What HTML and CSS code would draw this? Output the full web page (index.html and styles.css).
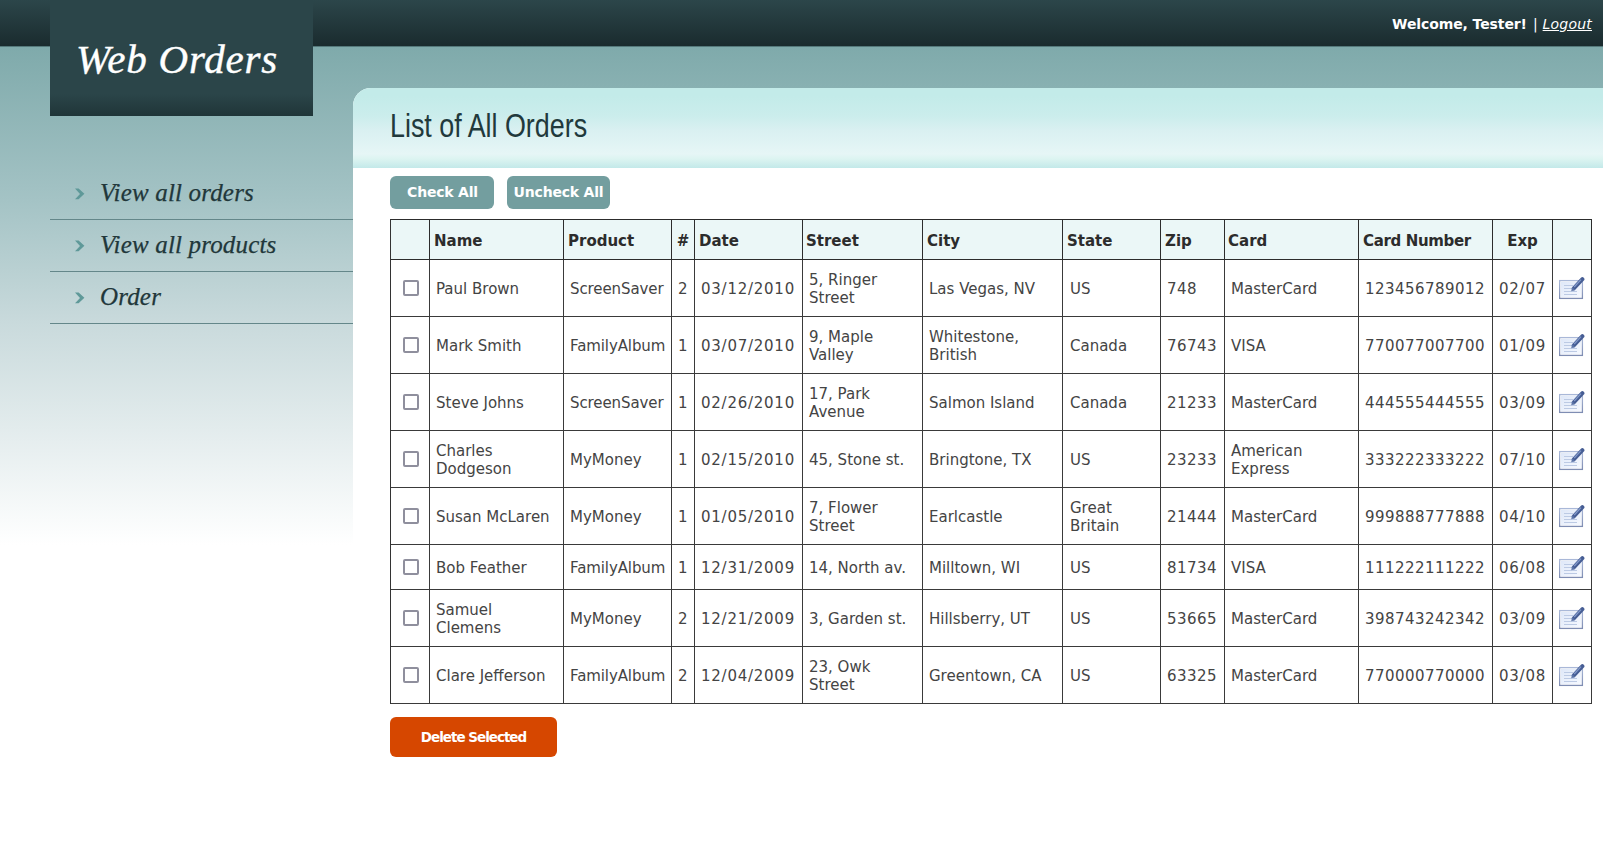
FILE: index.html
```html
<!DOCTYPE html>
<html lang="en">
<head>
<meta charset="utf-8">
<title>Web Orders</title>
<link rel="stylesheet" href="styles.css">
</head>
<body>
<svg class="defs" width="0" height="0">
  <defs>
    <linearGradient id="paper" x1="0" y1="0" x2="1" y2="1"><stop offset="0" stop-color="#dfe8f8"/><stop offset="1" stop-color="#f6f9ff"/></linearGradient>
    <linearGradient id="edge" x1="0" y1="0" x2="0" y2="1"><stop offset="0" stop-color="#a9b8d8"/><stop offset="1" stop-color="#7f8db3"/></linearGradient>
    <symbol id="edit" viewBox="0 0 26 24">
      <rect x="0.6" y="4.6" width="22.8" height="17.8" fill="#fff" stroke="url(#edge)" stroke-width="1.3"/>
      <rect x="2" y="6" width="20" height="15" fill="url(#paper)"/>
      <path d="M5 9.5h9M5 12.5h8M5 15.5h13M5 18.5h13" stroke="#bccae4" fill="none"/>
      <path d="M14.8 12.4L23.4 3.2" stroke="#465d94" stroke-width="4" stroke-linecap="round" fill="none"/>
      <path d="M15.2 11L22 3.6" stroke="#8299ca" stroke-width="1.3" fill="none"/>
      <path d="M12.2 15.2l1-4.2 3 3z" fill="#5c74a8"/>
    </symbol>
    <symbol id="chev" viewBox="0 0 10 12"><path d="M0 0.5h3.6L9.4 5.8L3.6 11.3H0L5 5.9z" fill="#5f9999"/></symbol>
  </defs>
</svg>
<header class="topbar">
  <h1 class="logo"><span>Web Orders</span></h1>
  <div class="login"><b>Welcome, Tester!</b><span class="bar">|</span><a href="#">Logout</a></div>
</header>
<div class="page">
  <nav class="menu">
    <a href="#"><svg><use href="#chev"/></svg><span>View all orders</span></a>
    <a href="#"><svg><use href="#chev"/></svg><span>View all products</span></a>
    <a href="#"><svg><use href="#chev"/></svg><span>Order</span></a>
  </nav>
  <main class="content">
    <div class="title"><h2>List of All Orders</h2></div>
    <div class="body">
      <div class="buttons"><a class="btn check">Check All</a><a class="btn uncheck">Uncheck All</a></div>
      <table class="orders">
        <colgroup><col class="w39"><col class="w134"><col class="w108"><col class="w23"><col class="w108"><col class="w120"><col class="w140"><col class="w98"><col class="w64"><col class="w134"><col class="w134"><col class="w60"><col class="w39"></colgroup>
        <thead><tr><th></th><th>Name</th><th>Product</th><th class="c">#</th><th>Date</th><th class="st">Street</th><th>City</th><th>State</th><th>Zip</th><th class="st">Card</th><th class="long">Card Number</th><th class="c">Exp</th><th></th></tr></thead>
        <tbody>
          <tr><td class="c"><i class="box"></i></td><td>Paul Brown</td><td class="p">ScreenSaver</td><td class="c n">2</td><td class="d">03/12/2010</td><td>5, Ringer<br>Street</td><td>Las Vegas, NV</td><td class="s">US</td><td class="n">748</td><td>MasterCard</td><td class="n">123456789012</td><td class="d">02/07</td><td class="e"><svg><use href="#edit"/></svg></td></tr>
          <tr><td class="c"><i class="box"></i></td><td>Mark Smith</td><td class="p">FamilyAlbum</td><td class="c n">1</td><td class="d">03/07/2010</td><td>9, Maple<br>Valley</td><td>Whitestone,<br>British</td><td class="s">Canada</td><td class="n">76743</td><td>VISA</td><td class="n">770077007700</td><td class="d">01/09</td><td class="e"><svg><use href="#edit"/></svg></td></tr>
          <tr><td class="c"><i class="box"></i></td><td>Steve Johns</td><td class="p">ScreenSaver</td><td class="c n">1</td><td class="d">02/26/2010</td><td>17, Park<br>Avenue</td><td>Salmon Island</td><td class="s">Canada</td><td class="n">21233</td><td>MasterCard</td><td class="n">444555444555</td><td class="d">03/09</td><td class="e"><svg><use href="#edit"/></svg></td></tr>
          <tr><td class="c"><i class="box"></i></td><td>Charles<br>Dodgeson</td><td>MyMoney</td><td class="c n">1</td><td class="d">02/15/2010</td><td>45, Stone st.</td><td>Bringtone, TX</td><td class="s">US</td><td class="n">23233</td><td>American<br>Express</td><td class="n">333222333222</td><td class="d">07/10</td><td class="e"><svg><use href="#edit"/></svg></td></tr>
          <tr><td class="c"><i class="box"></i></td><td>Susan McLaren</td><td>MyMoney</td><td class="c n">1</td><td class="d">01/05/2010</td><td>7, Flower<br>Street</td><td>Earlcastle</td><td class="s">Great<br>Britain</td><td class="n">21444</td><td>MasterCard</td><td class="n">999888777888</td><td class="d">04/10</td><td class="e"><svg><use href="#edit"/></svg></td></tr>
          <tr class="short"><td class="c"><i class="box"></i></td><td>Bob Feather</td><td class="p">FamilyAlbum</td><td class="c n">1</td><td class="d">12/31/2009</td><td>14, North av.</td><td>Milltown, WI</td><td class="s">US</td><td class="n">81734</td><td>VISA</td><td class="n">111222111222</td><td class="d">06/08</td><td class="e"><svg><use href="#edit"/></svg></td></tr>
          <tr><td class="c"><i class="box"></i></td><td>Samuel<br>Clemens</td><td>MyMoney</td><td class="c n">2</td><td class="d">12/21/2009</td><td>3, Garden st.</td><td>Hillsberry, UT</td><td class="s">US</td><td class="n">53665</td><td>MasterCard</td><td class="n">398743242342</td><td class="d">03/09</td><td class="e"><svg><use href="#edit"/></svg></td></tr>
          <tr><td class="c"><i class="box"></i></td><td>Clare Jefferson</td><td class="p">FamilyAlbum</td><td class="c n">2</td><td class="d">12/04/2009</td><td>23, Owk<br>Street</td><td>Greentown, CA</td><td class="s">US</td><td class="n">63325</td><td>MasterCard</td><td class="n">770000770000</td><td class="d">03/08</td><td class="e"><svg><use href="#edit"/></svg></td></tr>
        </tbody>
      </table>
      <a class="btn delete">Delete Selected</a>
    </div>
  </main>
</div>
</body>
</html>
```

FILE: styles.css
```css
* { box-sizing: border-box; }
body {
  margin: 0;
  height: 861px;
  overflow: hidden;
  font-family: "DejaVu Sans", sans-serif;
  font-size: 15px;
  color: #444;
  background: linear-gradient(#7faaab 47px, #a4c3c5 200px, #c9dadc 323px, #fff 545px) #fff;
}
.defs { position: absolute; }
.topbar {
  display: flex;
  justify-content: space-between;
  height: 47px;
  background: linear-gradient(#2c464a, #1a2b2e 46px, #55797b 46px);
}
.logo {
  margin: 0 0 0 50px;
  width: 263px;
  height: 116px;
  padding: 35px 0 0 26px;
  background: linear-gradient(#2b4549 94px, #203538);
  color: #fff;
  font: italic 400 41px/48px "Liberation Serif", serif;
  letter-spacing: 0.8px;
  -webkit-text-stroke: 0.4px currentColor;
  white-space: nowrap;
}
.login { padding: 14px 11px 0 0; font-size: 14px; line-height: 20px; color: #fff; white-space: nowrap; }
.login b { letter-spacing: -0.1px; }
.login .bar { margin: 0 5px 0 6px; }
.login a { color: #fff; font-style: italic; letter-spacing: 0.2px; }
.page { display: flex; }
.menu { width: 303px; margin: 121px 0 0 50px; }
.menu a {
  display: flex;
  align-items: center;
  height: 52px;
  padding: 1px 0 0 25px;
  border-bottom: 1px solid #64878a;
  color: #21373a;
  font: italic 25px/28px "Liberation Serif", serif;
  letter-spacing: 0.17px;
  -webkit-text-stroke: 0.25px currentColor;
  text-decoration: none;
}
.menu svg { width: 10px; height: 12px; margin-right: 15px; }
.menu span { margin-top: -2px; }
.content { flex: 1; margin-top: 41px; height: 773px; background: #fff; border-top-left-radius: 18px; }
.title {
  height: 80px;
  padding: 19px 0 0 37px;
  border-top-left-radius: 18px;
  background: linear-gradient(#c3ebe9 8px, #cbedec 28px, #d9f0f1 42px, #e6f6f6 66px, #dcf4f1 71px, #c3e9e9 80px);
}
.title h2 {
  margin: 0;
  color: #21393c;
  font: 400 33px/38px "Liberation Sans", sans-serif;
  white-space: nowrap;
  transform: scaleX(0.814);
  transform-origin: left;
}
.body { padding: 8px 11px 0 37px; }
.buttons { display: flex; gap: 13px; margin-bottom: 10px; }
.btn {
  display: flex;
  align-items: center;
  justify-content: center;
  height: 33px;
  padding-bottom: 2px;
  border-radius: 6px;
  background: #739e9f;
  color: #fff;
  font-size: 14px;
  font-weight: 700;
  letter-spacing: -0.2px;
  white-space: nowrap;
}
.check { width: 104px; padding-left: 1px; }
.uncheck { width: 103px; }
.delete { width: 167px; height: 40px; margin-top: 13px; padding-bottom: 0; background: #d64700; font-size: 13.5px; letter-spacing: -1px; }
.orders {
  table-layout: fixed;
  width: 1202px;
  border-collapse: separate;
  border-spacing: 0;
  border-left: 1px solid #333;
  border-top: 1px solid #2c2c2c;
}
.w39 { width: 39px; } .w134 { width: 134px; } .w108 { width: 108px; } .w23 { width: 23px; }
.w120 { width: 120px; } .w140 { width: 140px; } .w98 { width: 98px; } .w64 { width: 64px; } .w60 { width: 60px; }
.orders th {
  height: 40px;
  padding: 2px 0 0 4px;
  text-align: left;
  background: #ebf7f7;
  color: #2c2c2c;
  border-right: 1px solid #2c2c2c;
  border-bottom: 1px solid #2c2c2c;
  white-space: nowrap;
}
.orders th.st { padding-left: 3px; }
.orders th.long { letter-spacing: -0.35px; }
.orders td {
  height: 57px;
  padding: 1px 0 0 6px;
  line-height: 18px;
  border-right: 1px solid #3a3a3a;
  border-bottom: 1px solid #3a3a3a;
  white-space: nowrap;
}
.orders .short td { height: 45px; }
.orders .n { letter-spacing: 0.46px; }
.orders .d { letter-spacing: 0.75px; }
.orders .p { letter-spacing: -0.1px; }
.orders .s { padding-left: 7px; }
.orders th.c, .orders td.c { padding-left: 0; padding-right: 0; text-align: center; }
.orders td.e { padding: 0 0 1px 6px; }
.orders td svg { display: block; width: 26px; height: 24px; }
.box { display: block; width: 16px; height: 16px; margin: -2px 0 0 12px; border: 2px solid #8f8f9d; border-radius: 2px; background: #fff; }
```
